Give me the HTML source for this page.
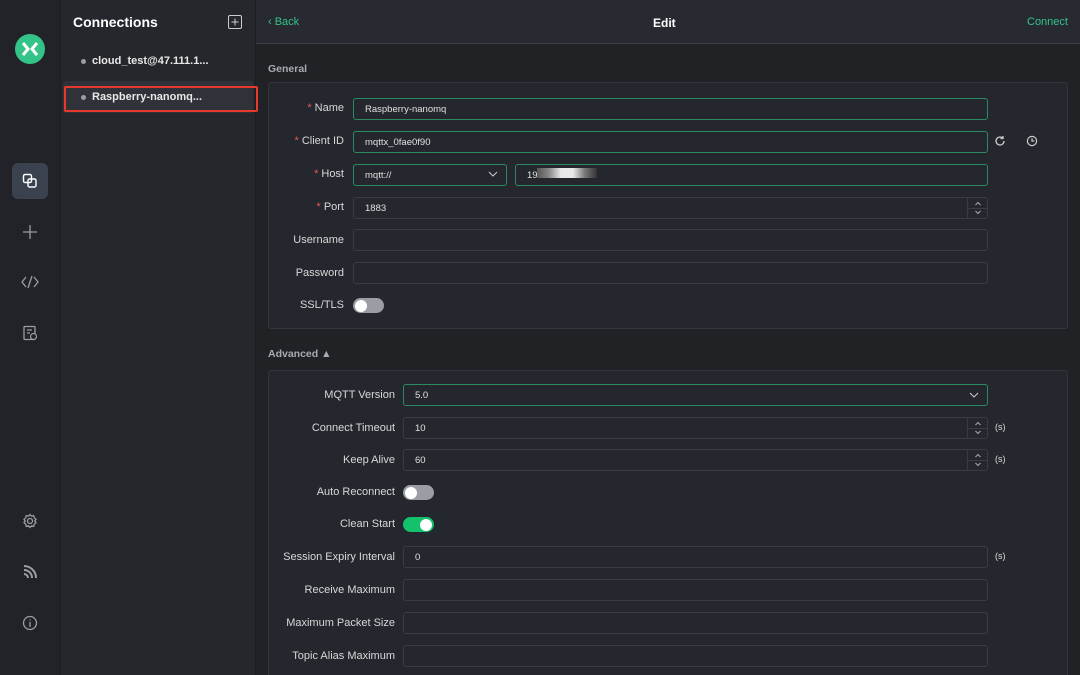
<!DOCTYPE html>
<html style="overflow:hidden;width:1080px;height:675px"><head><meta charset="utf-8"><style>
*{box-sizing:border-box;margin:0;padding:0}
body{width:1080px;height:675px;overflow:hidden;background:#202226;font-family:"Liberation Sans",sans-serif;position:relative;color:#e6e6e6}
.abs{position:absolute}
.lb{left:0;top:0;width:61px;height:675px;background:#212328;border-right:1px solid #1b1c20}
.cp{left:61px;top:0;width:195px;height:675px;background:#25272d;border-right:1px solid #1b1c20}
.hd{left:256px;top:0;width:824px;height:44px;background:#272a31;border-bottom:1px solid #3a3d44}
.card{background:#25272e;border:1px solid #33363d;border-radius:3px}
.lab{font-size:11px;color:#d8d8d8;text-align:right}
.star{color:#f0564f;margin-right:3px}
.inp{height:22px;border:1px solid #393c43;border-radius:3px;font-size:9.5px;color:#e0e0e0;padding:5px 11px;background:#25272e}
.g{border-color:#2b8a61}
.tg{width:31px;height:15px;border-radius:8px;background:#9a9da3}
.tg::after{content:"";position:absolute;left:2px;top:1.5px;width:12px;height:12px;border-radius:50%;background:#fff}
.tg.on{background:#13c26a}.tg.on::after{left:17px}
.spin{position:absolute;right:0;top:0;width:20px;height:100%;border-left:1px solid #393c43}
.spin::before{content:"";position:absolute;left:0;right:0;top:50%;border-top:1px solid #393c43}
.icon{stroke:#9a9da3;fill:none;stroke-width:1.3}
</style></head><body>
<div class="abs lb"></div>
<svg class="abs" style="left:14px;top:33px" width="32" height="32" viewBox="0 0 32 32"><circle cx="16" cy="16" r="15" fill="#34c388"/><path d="M9 10l5 6-5 6M23 10l-5 6 5 6" stroke="#fff" stroke-width="3" fill="none"/></svg>
<div class="abs" style="left:12px;top:163px;width:36px;height:36px;border-radius:6px;background:#3a4250"></div>
<svg class="abs" style="left:22px;top:173px" width="16" height="16" viewBox="0 0 16 16"><rect x="1.5" y="1.5" width="8" height="8" rx="1.5" stroke="#fff" fill="none" stroke-width="1.4"/><rect x="6" y="6" width="8" height="8" rx="1.5" stroke="#fff" fill="none" stroke-width="1.4"/></svg>
<svg class="abs" style="left:22px;top:224px" width="16" height="16"><path class="icon" d="M8 1v14M1 8h14"/></svg>
<svg class="abs" style="left:21px;top:275px" width="18" height="14"><path class="icon" d="M5 2L1 7l4 5M13 2l4 5-4 5M11 1L7 13"/></svg>
<svg class="abs" style="left:22px;top:325px" width="16" height="16"><rect class="icon" x="2" y="1.5" width="11" height="13" rx="1"/><path class="icon" d="M5 5h5M5 8h3"/><circle cx="11.5" cy="11.5" r="3" fill="#212328" stroke="#9a9da3" stroke-width="1.2"/></svg>
<svg class="abs" style="left:22px;top:513px" width="16" height="16"><circle class="icon" cx="8" cy="8" r="2.5"/><path class="icon" d="M8 1.5l1.5 1.7 2.2-.6.6 2.2 1.7 1.5-1.2 1.7 1.2 1.7-1.7 1.5-.6 2.2-2.2-.6L8 14.5l-1.5-1.7-2.2.6-.6-2.2L2 9.7l1.2-1.7L2 6.3l1.7-1.5.6-2.2 2.2.6z"/></svg>
<svg class="abs" style="left:22px;top:564px" width="16" height="16"><path d="M2 2a12 12 0 0 1 12 12M2 6a8 8 0 0 1 8 8M2 10a4 4 0 0 1 4 4" stroke="#9a9da3" stroke-width="2" fill="none"/></svg>
<svg class="abs" style="left:22px;top:615px" width="16" height="16"><circle class="icon" cx="8" cy="8" r="6.5"/><path class="icon" d="M8 7v5M8 4.5v1"/></svg>

<div class="abs cp"></div>
<div class="abs" style="left:73px;top:14px;font-size:14px;font-weight:bold;color:#fff">Connections</div>
<svg class="abs" style="left:228px;top:15px" width="15" height="15"><rect x=".5" y=".5" width="13" height="13" rx="1.5" stroke="#ccc" fill="none"/><path d="M7 3.5v7M3.5 7h7" stroke="#ccc"/></svg>
<div class="abs" style="left:81px;top:59px;width:5px;height:5px;border-radius:50%;background:#9a9da3"></div>
<div class="abs" style="left:92px;top:55px;font-size:11px;font-weight:bold;color:#e8e8e8">cloud_test@47.111.1...</div>
<div class="abs" style="left:63px;top:81px;width:190px;height:32px;background:#2f3239;border-radius:3px"></div>
<div class="abs" style="left:64px;top:86px;width:194px;height:26px;border:2px solid #e8392d;border-radius:2px"></div>
<div class="abs" style="left:81px;top:95px;width:5px;height:5px;border-radius:50%;background:#9a9da3"></div>
<div class="abs" style="left:92px;top:91px;font-size:11px;font-weight:bold;color:#e8e8e8">Raspberry-nanomq...</div>

<div class="abs hd"></div>
<div class="abs" style="left:268px;top:16px;font-size:11px;color:#34c388">&lsaquo; Back</div>
<div class="abs" style="left:653px;top:16px;font-size:12px;font-weight:bold;color:#fff">Edit</div>
<div class="abs" style="left:1027px;top:16px;font-size:11px;color:#34c388">Connect</div>

<div class="abs" style="left:268px;top:63px;font-size:10.5px;font-weight:bold;color:#a8abb0">General</div>
<div class="abs card" style="left:268px;top:82px;width:800px;height:247px"></div>
<div class="abs lab" style="left:270px;top:102px;width:74px"><span class="star">*</span>Name</div>
<div class="abs inp g" style="left:353px;top:98px;width:635px">Raspberry-nanomq</div>
<div class="abs lab" style="left:270px;top:135px;width:74px"><span class="star">*</span>Client ID</div>
<div class="abs inp g" style="left:353px;top:131px;width:635px">mqttx_0fae0f90</div>
<svg class="abs" style="left:994px;top:135px" width="12" height="12"><path d="M10 6a4 4 0 1 1-1.5-3.1M9 1v2.5H6.5" stroke="#ccc" fill="none" stroke-width="1.3"/></svg>
<svg class="abs" style="left:1026px;top:135px" width="12" height="12"><circle cx="6" cy="6" r="4.6" stroke="#ccc" fill="none" stroke-width="1.2"/><path d="M6 3.3V6h2.3" stroke="#ccc" fill="none" stroke-width="1.2"/></svg>
<div class="abs lab" style="left:270px;top:168px;width:74px"><span class="star">*</span>Host</div>
<div class="abs inp g" style="left:353px;top:164px;width:154px">mqtt://</div>
<svg class="abs" style="left:488px;top:170px" width="10" height="8"><path d="M1 2l4 4 4-4" stroke="#ccc" fill="none"/></svg>
<div class="abs inp g" style="left:515px;top:164px;width:473px">19</div>
<div class="abs" style="left:537px;top:168px;width:60px;height:10px;background:linear-gradient(90deg,#555 0,#888 20%,#e8e8e8 40%,#e8e8e8 60%,#777 80%,#333)"></div>
<div class="abs lab" style="left:270px;top:201px;width:74px"><span class="star">*</span>Port</div>
<div class="abs inp" style="left:353px;top:197px;width:635px">1883<div class="spin"><svg class="abs" style="left:6px;top:2px" width="8" height="16"><path d="M1.5 5L4 2.5 6.5 5M1.5 11L4 13.5 6.5 11" stroke="#aaa" fill="none"/></svg></div></div>
<div class="abs lab" style="left:270px;top:234px;width:74px">Username</div>
<div class="abs inp" style="left:353px;top:229px;width:635px"></div>
<div class="abs lab" style="left:270px;top:267px;width:74px">Password</div>
<div class="abs inp" style="left:353px;top:262px;width:635px"></div>
<div class="abs lab" style="left:270px;top:299px;width:74px">SSL/TLS</div>
<div class="abs tg" style="left:353px;top:298px"></div>

<div class="abs" style="left:268px;top:348px;font-size:10.5px;font-weight:bold;color:#a8abb0">Advanced &#9650;</div>
<div class="abs card" style="left:268px;top:370px;width:800px;height:310px"></div>
<div class="abs lab" style="left:270px;top:389px;width:125px">MQTT Version</div>
<div class="abs inp g" style="left:403px;top:384px;width:585px">5.0</div>
<svg class="abs" style="left:969px;top:391px" width="10" height="8"><path d="M1 2l4 4 4-4" stroke="#ccc" fill="none"/></svg>
<div class="abs lab" style="left:270px;top:422px;width:125px">Connect Timeout</div>
<div class="abs inp" style="left:403px;top:417px;width:585px">10<div class="spin"><svg class="abs" style="left:6px;top:2px" width="8" height="16"><path d="M1.5 5L4 2.5 6.5 5M1.5 11L4 13.5 6.5 11" stroke="#aaa" fill="none"/></svg></div></div>
<div class="abs" style="left:995px;top:422px;font-size:9px;color:#ddd">(s)</div>
<div class="abs lab" style="left:270px;top:454px;width:125px">Keep Alive</div>
<div class="abs inp" style="left:403px;top:449px;width:585px">60<div class="spin"><svg class="abs" style="left:6px;top:2px" width="8" height="16"><path d="M1.5 5L4 2.5 6.5 5M1.5 11L4 13.5 6.5 11" stroke="#aaa" fill="none"/></svg></div></div>
<div class="abs" style="left:995px;top:454px;font-size:9px;color:#ddd">(s)</div>
<div class="abs lab" style="left:270px;top:486px;width:125px">Auto Reconnect</div>
<div class="abs tg" style="left:403px;top:485px"></div>
<div class="abs lab" style="left:270px;top:518px;width:125px">Clean Start</div>
<div class="abs tg on" style="left:403px;top:517px"></div>
<div class="abs lab" style="left:270px;top:551px;width:125px">Session Expiry Interval</div>
<div class="abs inp" style="left:403px;top:546px;width:585px">0</div>
<div class="abs" style="left:995px;top:551px;font-size:9px;color:#ddd">(s)</div>
<div class="abs lab" style="left:270px;top:584px;width:125px">Receive Maximum</div>
<div class="abs inp" style="left:403px;top:579px;width:585px"></div>
<div class="abs lab" style="left:270px;top:617px;width:125px">Maximum Packet Size</div>
<div class="abs inp" style="left:403px;top:612px;width:585px"></div>
<div class="abs lab" style="left:270px;top:650px;width:125px">Topic Alias Maximum</div>
<div class="abs inp" style="left:403px;top:645px;width:585px"></div>
</body></html>
